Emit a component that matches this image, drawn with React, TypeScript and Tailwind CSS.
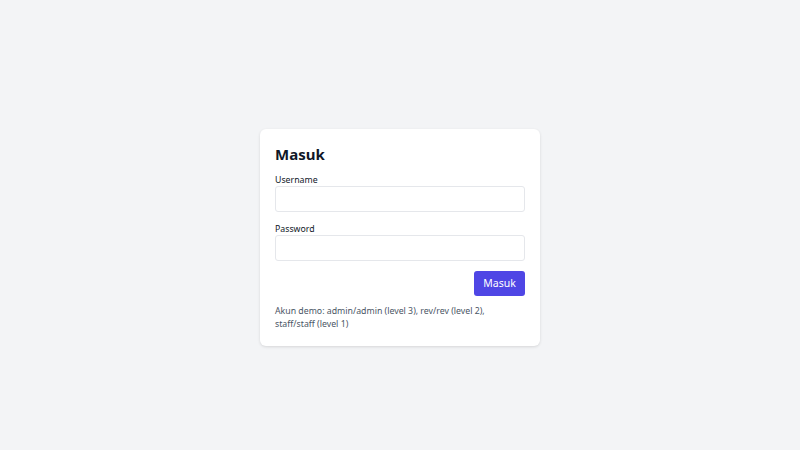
import React from 'react';

export default function App() {
  return (
    <div
      className="min-h-[450px] w-full bg-[#f3f4f6] pt-[129px]"
      style={{ fontFamily: '"Noto Sans", "Open Sans", sans-serif' }}
    >
      <div className="mx-auto w-[280px] rounded-md bg-white px-[15px] pt-[14px] pb-[15px] shadow-[0_1px_3px_rgba(0,0,0,0.12)]">
        <h1 className="text-[15px] leading-[22px] font-bold text-gray-900">Masuk</h1>

        <label className="mt-[9px] block text-[8.75px] leading-[12px] text-gray-900">Username</label>
        <input
          type="text"
          className="block h-[26px] w-full rounded-[3px] border border-[#e5e7eb] bg-white px-2 text-[11px] outline-none"
        />

        <label className="mt-[11px] block text-[8.75px] leading-[12px] text-gray-900">Password</label>
        <input
          type="password"
          className="block h-[26px] w-full rounded-[3px] border border-[#e5e7eb] bg-white px-2 text-[11px] outline-none"
        />

        <div className="mt-[10px] flex justify-end">
          <button
            type="button"
            className="h-[25px] w-[51px] rounded-[3px] bg-[#4f46e5] text-[10.5px] text-white"
          >
            Masuk
          </button>
        </div>

        <p className="mt-[9px] text-[8.75px] leading-[13px] text-gray-600">
          Akun demo: admin/admin (level 3), rev/rev (level 2),
          <br />
          staff/staff (level 1)
        </p>
      </div>
    </div>
  );
}
